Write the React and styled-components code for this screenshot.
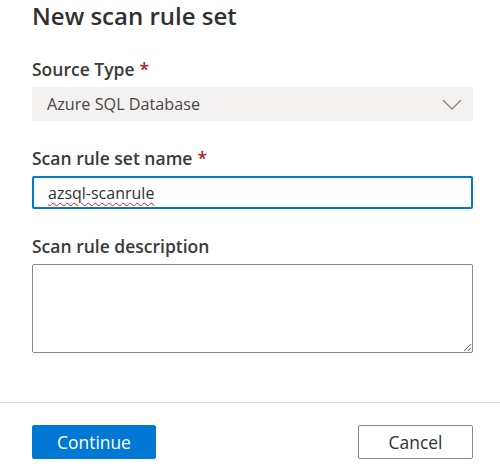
import React from 'react';
import styled, { createGlobalStyle } from 'styled-components';

const Global = createGlobalStyle`
  html, body { margin: 0; padding: 0; background: #fff; }
  body { font-family: "Open Sans", "Noto Sans", sans-serif; color: #323130; }
`;

const Panel = styled.div`
  width: 500px;
  height: 472px;
  display: flex;
  flex-direction: column;
  overflow: hidden;
`;

const Body = styled.div`
  padding: 0 27px 0 32px;
  display: flex;
  flex-direction: column;
`;

const Title = styled.h1`
  margin: 0;
  font-size: 24px;
  font-weight: 600;
  line-height: 32px;
  color: #323130;
`;

const Field = styled.div`
  display: flex;
  flex-direction: column;
  margin-top: 25px;
`;

const Label = styled.label`
  font-size: 17.5px;
  font-weight: 600;
  line-height: 24px;
  padding-bottom: 6px;
  color: #3b3a39;
  span {
    color: #a4262c;
    margin-left: 5px;
  }
`;

const Select = styled.div`
  height: 34px;
  background: #f3f2f1;
  border-radius: 2px;
  display: flex;
  align-items: center;
  justify-content: space-between;
  padding: 0 11px 0 15px;
  font-size: 16.2px;
  color: #484644;
`;

const Input = styled.div`
  height: 33px;
  box-sizing: border-box;
  border: 2px solid #0078d4;
  border-radius: 2px;
  display: flex;
  align-items: center;
  padding: 0 14px;
  font-size: 16px;
  color: #323130;
  span {
    text-decoration: underline wavy #e81123;
    text-decoration-thickness: 1px;
    text-underline-offset: 3px;
  }
`;

const TextArea = styled.textarea`
  height: 89px;
  box-sizing: border-box;
  border: 1px solid #8a8886;
  border-radius: 2px;
  resize: vertical;
  font-family: inherit;
  font-size: 15px;
  margin: 0;
  outline: none;
`;

const Divider = styled.div`
  height: 1px;
  background: #d7d5d3;
  margin-top: 49px;
`;

const Footer = styled.div`
  display: flex;
  justify-content: space-between;
  padding: 22px 27px 0 32px;
`;

const Button = styled.button`
  height: 34px;
  box-sizing: border-box;
  border-radius: 2px;
  font-family: inherit;
  font-size: 17.4px;
  font-weight: 400;
  padding: 0;
  cursor: pointer;
  width: ${p => p.$w}px;
  background: ${p => (p.$primary ? '#0078d4' : '#fff')};
  color: ${p => (p.$primary ? '#fff' : '#323130')};
  border: 1px solid ${p => (p.$primary ? '#0078d4' : '#8a8886')};
`;

const Chevron = () => (
  <svg width="20" height="11" viewBox="0 0 20 11" fill="none">
    <path d="M1 1 L10 10 L19 1" stroke="#8a8886" strokeWidth="1.4" />
  </svg>
);

export default function App() {
  return (
    <Panel>
      <Global />
      <Body>
        <Title>New scan rule set</Title>
        <Field>
          <Label>Source Type<span>*</span></Label>
          <Select>
            Azure SQL Database
            <Chevron />
          </Select>
        </Field>
        <Field>
          <Label>Scan rule set name<span>*</span></Label>
          <Input><span>azsql-scanrule</span></Input>
        </Field>
        <Field>
          <Label>Scan rule description</Label>
          <TextArea />
        </Field>
      </Body>
      <Divider />
      <Footer>
        <Button $primary $w={124}>Continue</Button>
        <Button $w={115}>Cancel</Button>
      </Footer>
    </Panel>
  );
}
